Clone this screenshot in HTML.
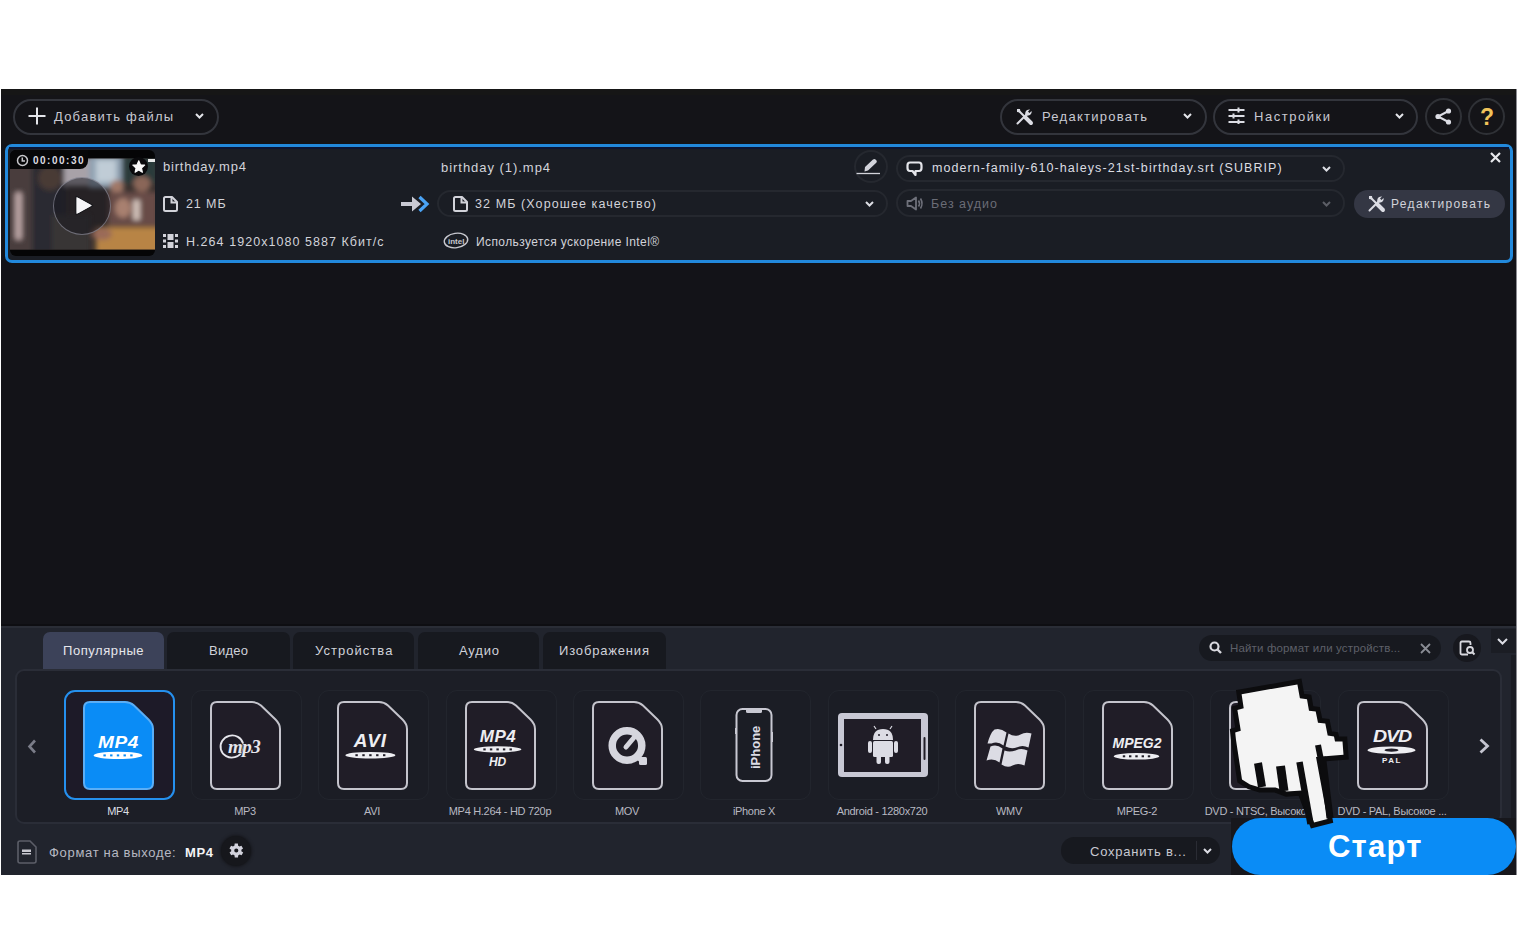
<!DOCTYPE html>
<html><head><meta charset="utf-8">
<style>
*{margin:0;padding:0;box-sizing:border-box}
html,body{width:1517px;height:939px;overflow:hidden;background:#fff}
body{position:relative;font-family:"Liberation Sans",sans-serif;color:#d8d9de}
.a{position:absolute}
.t{position:absolute;white-space:nowrap;line-height:1}
svg{position:absolute;overflow:visible}
</style></head><body>
<!-- app frame -->
<div class="a" style="left:1px;top:89px;width:1515px;height:786px;background:#131318"></div>
<!-- toolbar -->
<div class="a" style="left:1px;top:89px;width:1515px;height:55px;background:#141418"></div>
<div class="a" style="left:1px;top:89px;width:1515px;height:6px;background:#161616"></div>

<!-- add files button -->
<div class="a" style="left:13px;top:99px;width:206px;height:36px;border:2px solid #33353c;border-radius:18px"></div>
<svg style="left:28px;top:107px" width="18" height="18"><path d="M9 0.5V17.5M0.5 9H17.5" stroke="#e4e5ea" stroke-width="2"/></svg>
<div class="t" style="left:54px;top:110px;font-size:13px;letter-spacing:1.22px;color:#c8c9d2">Добавить файлы</div>
<svg style="left:195px;top:113px" width="9" height="6"><path d="M1 1L4.5 4.5L8 1" stroke="#e4e5ea" stroke-width="2" fill="none"/></svg>

<!-- Edit button -->
<div class="a" style="left:1000px;top:99px;width:207px;height:36px;border:2px solid #33353c;border-radius:18px"></div>
<svg style="left:1016px;top:108px" width="17" height="17" viewBox="0 0 17 17"><path d="M1.5 1.5L15 15" stroke="#dcdde4" stroke-width="2"/><path d="M9.5 9.5L15 15" stroke="#dcdde4" stroke-width="4" stroke-linecap="round"/><path d="M1 1L4 1L4.5 4.5L1 4Z" fill="#dcdde4"/><path d="M1.5 15.5L10 7" stroke="#dcdde4" stroke-width="2" stroke-linecap="round"/><path d="M9.5 7.5C8.5 4 10.5 1 14 1.5L12 3.5L13.5 5L15.5 3C16.5 6 13 8.5 10 7.5Z" fill="#dcdde4"/></svg>
<div class="t" style="left:1042px;top:110px;font-size:13px;letter-spacing:1.27px;color:#c8c9d2">Редактировать</div>
<svg style="left:1183px;top:113px" width="9" height="6"><path d="M1 1L4.5 4.5L8 1" stroke="#e4e5ea" stroke-width="2" fill="none"/></svg>
<!-- Settings button -->
<div class="a" style="left:1213px;top:99px;width:205px;height:36px;border:2px solid #33353c;border-radius:18px"></div>
<svg style="left:1228px;top:107px" width="17" height="17" viewBox="0 0 17 17"><path d="M0.5 3H16.5M0.5 9H16.5M0.5 15H16.5" stroke="#dcdde4" stroke-width="2"/><path d="M10.5 0.5V5.5M5.5 6.5V11.5M10.5 12.5V17" stroke="#dcdde4" stroke-width="2"/></svg>
<div class="t" style="left:1254px;top:110px;font-size:13px;letter-spacing:1.53px;color:#c8c9d2">Настройки</div>
<svg style="left:1395px;top:113px" width="9" height="6"><path d="M1 1L4.5 4.5L8 1" stroke="#e4e5ea" stroke-width="2" fill="none"/></svg>
<!-- share / help -->
<div class="a" style="left:1425px;top:98px;width:37px;height:37px;border:2px solid #2f3136;border-radius:50%"></div>
<svg style="left:1435px;top:108px" width="17" height="17" viewBox="0 0 17 17"><path d="M13.5 3L3 8.5L13.5 14" stroke="#dcdde4" stroke-width="2" fill="none"/><circle cx="13.5" cy="3" r="2.6" fill="#dcdde4"/><circle cx="3" cy="8.5" r="2.6" fill="#dcdde4"/><circle cx="13.5" cy="14" r="2.6" fill="#dcdde4"/></svg>
<div class="a" style="left:1468px;top:98px;width:37px;height:37px;border:2px solid #2f3136;border-radius:50%"></div>
<div class="t" style="left:1480px;top:106px;font-size:23px;font-weight:700;color:#f0c35a">?</div>

<!-- file card -->
<div class="a" style="left:5px;top:144px;width:1508px;height:119px;border:3px solid #2289dc;border-radius:7px;background:#1a1d24"></div>
<div class="a" style="left:9px;top:147px;width:1500px;height:2px;background:#0c1533"></div>
<!-- thumbnail -->
<div class="a" style="left:10px;top:150px;width:145px;height:106px;background:#050506;border-radius:6px;overflow:hidden">
<svg style="left:0;top:0" width="145" height="106" viewBox="0 0 145 106">
<defs><filter id="bl" x="-20%" y="-20%" width="140%" height="140%"><feGaussianBlur stdDeviation="2.5"/></filter>
<clipPath id="cp"><rect x="0" y="8.5" width="145" height="91"/></clipPath></defs>
<g clip-path="url(#cp)">
<rect x="0" y="8" width="145" height="92" fill="#38302e"/>
<g filter="url(#bl)">
<rect x="-5" y="10" width="28" height="95" fill="#4a3c3c"/>
<rect x="5" y="42" width="7" height="48" rx="3" fill="#b8a2a2"/>
<rect x="22" y="10" width="34" height="95" fill="#2c2a30"/>
<ellipse cx="40" cy="28" rx="12" ry="12" fill="#4a3a36"/>
<rect x="54" y="8" width="26" height="28" fill="#a8a2a8"/>
<rect x="79" y="6" width="34" height="32" fill="#90a2b2"/>
<rect x="86" y="10" width="20" height="22" fill="#c0ccd6"/>
<rect x="112" y="6" width="36" height="28" fill="#2c3a3a"/>
<ellipse cx="107" cy="37" rx="7" ry="7" fill="#a07868"/>
<ellipse cx="132" cy="34" rx="9" ry="8" fill="#8a6658"/>
<rect x="98" y="42" width="50" height="34" fill="#684c46"/>
<ellipse cx="113" cy="58" rx="8" ry="10" fill="#a88070"/>
<rect x="123" y="50" width="7" height="20" fill="#d0c0b8"/>
<rect x="42" y="65" width="38" height="40" fill="#383434"/>
<rect x="86" y="77" width="64" height="28" fill="#b88444"/>
<ellipse cx="92" cy="84" rx="10" ry="6" fill="#9a6a58"/>
</g>
</g>
</svg>
</div>
<!-- time badge -->
<div class="a" style="left:10px;top:150px;width:78px;height:19px;background:#070708;border-radius:6px 0 8px 0"></div>
<svg style="left:16px;top:154px" width="13" height="13" viewBox="0 0 13 13"><circle cx="6.5" cy="6.5" r="5" stroke="#c8c8cc" stroke-width="1.5" fill="none"/><path d="M6.3 3.5V7H9" stroke="#c8c8cc" stroke-width="1.5" fill="none"/></svg>
<div class="t" style="left:33px;top:156px;font-size:10px;font-weight:700;letter-spacing:1.5px;color:#dcdce0">00:00:30</div>
<!-- star -->
<div class="a" style="left:129px;top:157px;width:19px;height:19px;background:#0a0a0c;border-radius:50%"></div>
<svg style="left:132px;top:159.5px" width="13.5" height="13.5" viewBox="0 0 24 24"><path d="M12 1.5L15 8.5L22.5 9.2L16.8 14.2L18.5 21.8L12 17.8L5.5 21.8L7.2 14.2L1.5 9.2L9 8.5Z" fill="#fafafa" stroke="#fafafa" stroke-width="2" stroke-linejoin="round"/></svg>
<div class="a" style="left:148px;top:159px;width:7px;height:3px;background:#e8e8e8"></div>
<!-- play -->
<div class="a" style="left:53px;top:176.5px;width:58px;height:58px;border-radius:50%;background:rgba(20,20,28,0.5);border:1.5px solid rgba(180,180,195,0.5)"></div>
<svg style="left:73px;top:194px" width="22" height="23" viewBox="0 0 22 23"><path d="M3.5 3L19 11.5L3.5 20Z" fill="#f6f6f8" stroke="#1a1a1e" stroke-width="2.5" stroke-linejoin="round" paint-order="stroke fill"/><path d="M4.5 4.5L17 11.5L4.5 18.5Z" fill="#f6f6f8" stroke="#f6f6f8" stroke-width="1.5" stroke-linejoin="round"/></svg>

<!-- left info -->
<div class="t" style="left:163px;top:160px;font-size:13px;letter-spacing:0.8px;color:#d2d3da">birthday.mp4</div>
<svg style="left:163px;top:196px" width="15" height="16" viewBox="0 0 15 16"><path d="M1 2.5Q1 1 2.5 1H9L14 6V13.5Q14 15 12.5 15H2.5Q1 15 1 13.5Z" stroke="#d2d3da" stroke-width="2" fill="none" stroke-linejoin="round"/><path d="M8.5 1.5V6.5H13.5" stroke="#d2d3da" stroke-width="2" fill="none"/></svg>
<div class="t" style="left:186px;top:198px;font-size:12.5px;letter-spacing:0.9px;color:#d2d3da">21 МБ</div>
<svg style="left:163px;top:234px" width="15" height="14" viewBox="0 0 15 14"><rect x="0" y="0" width="3" height="3" fill="#d2d3da"/><rect x="0" y="5.5" width="3" height="3" fill="#d2d3da"/><rect x="0" y="11" width="3" height="3" fill="#d2d3da"/><rect x="12" y="0" width="3" height="3" fill="#d2d3da"/><rect x="12" y="5.5" width="3" height="3" fill="#d2d3da"/><rect x="12" y="11" width="3" height="3" fill="#d2d3da"/><rect x="4.5" y="0" width="6" height="6" fill="#d2d3da"/><rect x="4.5" y="8" width="6" height="6" fill="#d2d3da"/></svg>
<div class="t" style="left:186px;top:236px;font-size:12.5px;letter-spacing:1.05px;color:#d2d3da">H.264 1920x1080 5887 Кбит/с</div>

<!-- arrow -->
<svg style="left:400px;top:195px" width="31" height="18" viewBox="0 0 31 18"><path d="M1 7H12V1.5L21 9L12 16.5V11H1Z" fill="#c9c9d3"/><path d="M19.5 2L27 9L19.5 16" stroke="#4aa3f5" stroke-width="3.2" fill="none"/></svg>

<!-- middle -->
<div class="t" style="left:441px;top:161px;font-size:13px;letter-spacing:0.96px;color:#d2d3da">birthday (1).mp4</div>
<div class="a" style="left:437px;top:190px;width:451px;height:27px;border:2px solid #25282f;border-radius:14px"></div>
<svg style="left:453px;top:196px" width="15" height="16" viewBox="0 0 15 16"><path d="M1 2.5Q1 1 2.5 1H9L14 6V13.5Q14 15 12.5 15H2.5Q1 15 1 13.5Z" stroke="#d2d3da" stroke-width="2" fill="none" stroke-linejoin="round"/><path d="M8.5 1.5V6.5H13.5" stroke="#d2d3da" stroke-width="2" fill="none"/></svg>
<div class="t" style="left:475px;top:198px;font-size:12.5px;letter-spacing:1.1px;color:#d2d3da">32 МБ (Хорошее качество)</div>
<svg style="left:865px;top:201px" width="9" height="6"><path d="M1 1L4.5 4.5L8 1" stroke="#dcdde4" stroke-width="2" fill="none"/></svg>
<svg style="left:443px;top:232px" width="26" height="17" viewBox="0 0 26 17"><ellipse cx="13" cy="8.5" rx="11.8" ry="7.2" stroke="#c8c9d0" stroke-width="1.4" fill="none" transform="rotate(-8 13 8.5)"/><text x="5" y="11.5" font-family="Liberation Sans" font-size="8" font-weight="700" fill="#c8c9d0">intel</text></svg>
<div class="t" style="left:476px;top:236px;font-size:12px;letter-spacing:0.41px;color:#d2d3da">Используется ускорение Intel®</div>
<!-- pencil -->
<div class="a" style="left:854px;top:150px;width:34px;height:33px;border:2px solid #25282f;border-radius:50%"></div>
<svg style="left:856px;top:157px" width="26" height="18" viewBox="0 0 26 18"><path d="M9 10L17 2.5Q18.5 1.5 19.5 2.5L20.5 3.5Q21.5 5 20 6L12 13.5L8.5 14.5Z" fill="#d2d3da"/><path d="M0.5 16.5H24" stroke="#d2d3da" stroke-width="1.3"/></svg>

<!-- right: subtitles / audio -->
<div class="a" style="left:896px;top:155px;width:449px;height:27px;border:2px solid #25282f;border-radius:14px"></div>
<svg style="left:906px;top:161px" width="17" height="16" viewBox="0 0 17 16"><path d="M4 1.5H13Q15.5 1.5 15.5 4.5V7Q15.5 10 13 10H9.5V14L6.5 10H4Q1.5 10 1.5 7V4.5Q1.5 1.5 4 1.5Z" stroke="#e4e5ea" stroke-width="2.2" fill="none" stroke-linejoin="round"/></svg>
<div class="t" style="left:932px;top:162px;font-size:12.5px;letter-spacing:1.08px;color:#dcdde3">modern-family-610-haleys-21st-birthday.srt (SUBRIP)</div>
<svg style="left:1322px;top:166px" width="9" height="6"><path d="M1 1L4.5 4.5L8 1" stroke="#dcdde4" stroke-width="2" fill="none"/></svg>
<div class="a" style="left:896px;top:189px;width:449px;height:28px;border:2px solid #25282f;border-radius:14px"></div>
<svg style="left:906px;top:196px" width="18" height="15" viewBox="0 0 18 15"><path d="M1.5 5H5L10 1.5V13.5L5 10H1.5Z" stroke="#6e707a" stroke-width="1.8" fill="none" stroke-linejoin="round"/><path d="M12.5 4.5Q14.5 7.5 12.5 10.5M14.5 2.5Q17.5 7.5 14.5 12.5" stroke="#6e707a" stroke-width="1.6" fill="none"/></svg>
<div class="t" style="left:931px;top:198px;font-size:12.5px;letter-spacing:1.0px;color:#6a6c76">Без аудио</div>
<svg style="left:1322px;top:201px" width="9" height="6"><path d="M1 1L4.5 4.5L8 1" stroke="#5c5e66" stroke-width="2" fill="none"/></svg>
<!-- edit in card -->
<div class="a" style="left:1354px;top:190px;width:151px;height:28px;background:#343744;border-radius:14px"></div>
<svg style="left:1368px;top:195px" width="17" height="17" viewBox="0 0 17 17"><path d="M1.5 1.5L15 15" stroke="#dcdde4" stroke-width="2"/><path d="M9.5 9.5L15 15" stroke="#dcdde4" stroke-width="4" stroke-linecap="round"/><path d="M1 1L4 1L4.5 4.5L1 4Z" fill="#dcdde4"/><path d="M1.5 15.5L10 7" stroke="#dcdde4" stroke-width="2" stroke-linecap="round"/><path d="M9.5 7.5C8.5 4 10.5 1 14 1.5L12 3.5L13.5 5L15.5 3C16.5 6 13 8.5 10 7.5Z" fill="#dcdde4"/></svg>
<div class="t" style="left:1391px;top:198px;font-size:12px;letter-spacing:1.34px;color:#d2d3da">Редактировать</div>
<!-- close -->
<svg style="left:1490px;top:152px" width="11" height="11" viewBox="0 0 11 11"><path d="M1 1L10 10M10 1L1 10" stroke="#e8e8ec" stroke-width="2.2"/></svg>

<!-- bottom panel -->
<div class="a" style="left:1px;top:626px;width:1515px;height:249px;background:#21242d"></div>
<div class="a" style="left:1px;top:624px;width:1515px;height:2px;background:#0e0e12"></div>
<div class="a" style="left:1px;top:626px;width:1515px;height:2px;background:#2a2d36"></div>
<!-- tabs -->
<div class="a" style="left:43px;top:632px;width:121px;height:38px;background:#3c4259;border-radius:7px 7px 0 0"></div>
<div class="a" style="left:167px;top:632px;width:123px;height:38px;background:#17191f;border-radius:7px 7px 0 0"></div>
<div class="a" style="left:293px;top:632px;width:121px;height:38px;background:#17191f;border-radius:7px 7px 0 0"></div>
<div class="a" style="left:418px;top:632px;width:121px;height:38px;background:#17191f;border-radius:7px 7px 0 0"></div>
<div class="a" style="left:543px;top:632px;width:123px;height:38px;background:#17191f;border-radius:7px 7px 0 0"></div>
<div class="t" style="left:63px;top:644px;font-size:13px;letter-spacing:0.57px;color:#e6e7ec">Популярные</div>
<div class="t" style="left:209px;top:644px;font-size:13px;letter-spacing:0.25px;color:#d0d2da">Видео</div>
<div class="t" style="left:315px;top:644px;font-size:13px;letter-spacing:1.04px;color:#d0d2da">Устройства</div>
<div class="t" style="left:459px;top:644px;font-size:13px;letter-spacing:0.83px;color:#d0d2da">Аудио</div>
<div class="t" style="left:559px;top:644px;font-size:13px;letter-spacing:0.83px;color:#d0d2da">Изображения</div>
<!-- search -->
<div class="a" style="left:1199px;top:635px;width:242px;height:26px;background:#17191f;border-radius:13px"></div>
<svg style="left:1209px;top:641px" width="13" height="13" viewBox="0 0 13 13"><circle cx="5.5" cy="5.5" r="4" stroke="#d8d8de" stroke-width="2.2" fill="none"/><path d="M8.5 8.5L12 12" stroke="#d8d8de" stroke-width="2.4"/></svg>
<div class="t" style="left:1230px;top:643px;font-size:11.5px;letter-spacing:0.15px;color:#5e6069">Найти формат или устройств...</div>
<svg style="left:1420px;top:643px" width="11" height="11" viewBox="0 0 11 11"><path d="M1 1L10 10M10 1L1 10" stroke="#8a8c94" stroke-width="1.8"/></svg>
<div class="a" style="left:1453px;top:634px;width:28px;height:28px;background:#17181e;border-radius:50%"></div>
<svg style="left:1459px;top:640px" width="17" height="16" viewBox="0 0 17 16"><path d="M9 14.5H3Q1.5 14.5 1.5 13V3Q1.5 1.5 3 1.5H10Q11.5 1.5 11.5 3V5" stroke="#d8d8de" stroke-width="1.8" fill="none"/><circle cx="11" cy="10" r="3" stroke="#d8d8de" stroke-width="1.8" fill="none"/><path d="M13 12L15.5 14.5" stroke="#d8d8de" stroke-width="2"/></svg>
<div class="a" style="left:1491px;top:629px;width:25px;height:24px;background:#1b1d24"></div>
<svg style="left:1497px;top:638px" width="11" height="7"><path d="M1 1L5.5 5.5L10 1" stroke="#dcdde4" stroke-width="2" fill="none"/></svg>
<!-- grid panel -->
<div class="a" style="left:15px;top:669px;width:1487px;height:155px;background:#1c1e26;border:2px solid #2a2d37;border-radius:9px"></div>
<svg style="left:27px;top:739px" width="10" height="15" viewBox="0 0 10 15"><path d="M8 1.5L2.5 7.5L8 13.5" stroke="#7a7c88" stroke-width="2.6" fill="none"/></svg>
<svg style="left:1478px;top:738px" width="12" height="16" viewBox="0 0 12 16"><path d="M2.5 1.5L9.5 8L2.5 14.5" stroke="#c4c5d0" stroke-width="2.8" fill="none"/></svg>
<!-- cards -->
<div class="a" style="left:64px;top:690px;width:111px;height:110px;border:2.5px solid #2590ee;border-radius:11px;background:#1d1a28"></div>
<svg style="left:83px;top:701px" width="71" height="89" viewBox="0 0 71 89"><path d="M7 1H42Q47 1 51 4.5L65.5 18.5Q70 23 70 28V82Q70 88 64 88H7Q1 88 1 82V7Q1 1 7 1Z" fill="#0a8cf6" stroke="#5aaef6" stroke-width="2"/><text x="35.5" y="47" text-anchor="middle" font-family="Liberation Sans" font-size="17" font-weight="700" font-style="italic" fill="#ffffff" letter-spacing="0.5" transform="translate(35.5 0) scale(1.12 1) translate(-35.5 0)">MP4</text><ellipse cx="35" cy="54.4" rx="24.4" ry="3.6" fill="#ffffff"/><rect x="20.4" y="53.4" width="2.4" height="2" fill="#0a8cf6"/><rect x="27.1" y="53.4" width="2.4" height="2" fill="#0a8cf6"/><rect x="33.8" y="53.4" width="2.4" height="2" fill="#0a8cf6"/><rect x="40.5" y="53.4" width="2.4" height="2" fill="#0a8cf6"/><rect x="47.2" y="53.4" width="2.4" height="2" fill="#0a8cf6"/></svg>
<div class="t" style="left:18px;width:200px;text-align:center;top:806px;font-size:11px;letter-spacing:-0.3px;color:#dcdde3">MP4</div>
<div class="a" style="left:191px;top:690px;width:111px;height:110px;border:1px solid #22252d;border-radius:11px;background:#1b1d25"></div>
<svg style="left:210px;top:701px" width="71" height="89" viewBox="0 0 71 89"><path d="M7 1H42Q47 1 51 4.5L65.5 18.5Q70 23 70 28V82Q70 88 64 88H7Q1 88 1 82V7Q1 1 7 1Z" fill="#201d27" stroke="#c4c4cc" stroke-width="2"/><ellipse cx="22" cy="45.5" rx="11.5" ry="11" stroke="#e6e6ec" stroke-width="1.8" fill="none" transform="rotate(-15 22 45.5)"/><text x="18" y="51.5" font-family="Liberation Serif" font-size="19" font-weight="700" font-style="italic" fill="#e6e6ec" stroke="#201d27" stroke-width="1.2" paint-order="stroke fill" letter-spacing="-0.5">mp3</text></svg>
<div class="t" style="left:145px;width:200px;text-align:center;top:806px;font-size:11px;letter-spacing:-0.3px;color:#b8b9c2">MP3</div>
<div class="a" style="left:318px;top:690px;width:111px;height:110px;border:1px solid #22252d;border-radius:11px;background:#1b1d25"></div>
<svg style="left:337px;top:701px" width="71" height="89" viewBox="0 0 71 89"><path d="M7 1H42Q47 1 51 4.5L65.5 18.5Q70 23 70 28V82Q70 88 64 88H7Q1 88 1 82V7Q1 1 7 1Z" fill="#201d27" stroke="#c4c4cc" stroke-width="2"/><text x="33.5" y="46.4" text-anchor="middle" font-family="Liberation Sans" font-size="19" font-weight="700" font-style="italic" fill="#eeeef2" letter-spacing="1">AVI</text><ellipse cx="33.4" cy="54.2" rx="25" ry="3.3" fill="#eeeef2"/><rect x="18.4" y="53.2" width="2.4" height="2" fill="#201d27"/><rect x="25.3" y="53.2" width="2.4" height="2" fill="#201d27"/><rect x="32.2" y="53.2" width="2.4" height="2" fill="#201d27"/><rect x="39.1" y="53.2" width="2.4" height="2" fill="#201d27"/><rect x="46.0" y="53.2" width="2.4" height="2" fill="#201d27"/></svg>
<div class="t" style="left:272px;width:200px;text-align:center;top:806px;font-size:11px;letter-spacing:-0.3px;color:#b8b9c2">AVI</div>
<div class="a" style="left:446px;top:690px;width:111px;height:110px;border:1px solid #22252d;border-radius:11px;background:#1b1d25"></div>
<svg style="left:465px;top:701px" width="71" height="89" viewBox="0 0 71 89"><path d="M7 1H42Q47 1 51 4.5L65.5 18.5Q70 23 70 28V82Q70 88 64 88H7Q1 88 1 82V7Q1 1 7 1Z" fill="#201d27" stroke="#c4c4cc" stroke-width="2"/><text x="33" y="40.7" text-anchor="middle" font-family="Liberation Sans" font-size="17" font-weight="700" font-style="italic" fill="#eeeef2" letter-spacing="0.5">MP4</text><ellipse cx="32.6" cy="48.4" rx="23.8" ry="3.1" fill="#eeeef2"/><rect x="18.3" y="47.4" width="2.4" height="2" fill="#201d27"/><rect x="24.9" y="47.4" width="2.4" height="2" fill="#201d27"/><rect x="31.4" y="47.4" width="2.4" height="2" fill="#201d27"/><rect x="37.9" y="47.4" width="2.4" height="2" fill="#201d27"/><rect x="44.5" y="47.4" width="2.4" height="2" fill="#201d27"/><text x="32.6" y="65" text-anchor="middle" font-family="Liberation Sans" font-size="12" font-weight="700" font-style="italic" fill="#eeeef2">HD</text></svg>
<div class="t" style="left:400px;width:200px;text-align:center;top:806px;font-size:11px;letter-spacing:-0.3px;color:#b8b9c2">MP4 H.264 - HD 720p</div>
<div class="a" style="left:573px;top:690px;width:111px;height:110px;border:1px solid #22252d;border-radius:11px;background:#1b1d25"></div>
<svg style="left:592px;top:701px" width="71" height="89" viewBox="0 0 71 89"><path d="M7 1H42Q47 1 51 4.5L65.5 18.5Q70 23 70 28V82Q70 88 64 88H7Q1 88 1 82V7Q1 1 7 1Z" fill="#201d27" stroke="#c4c4cc" stroke-width="2"/><circle cx="35" cy="44.5" r="14.8" stroke="#d6d6de" stroke-width="7.5" fill="none"/><path d="M46 54L54 61L51 64L43 57Z" fill="#d6d6de"/><rect x="47" y="56" width="8" height="8" rx="1.5" fill="#d6d6de"/><path d="M34 46L42 36.5" stroke="#d6d6de" stroke-width="5" stroke-linecap="round"/></svg>
<div class="t" style="left:527px;width:200px;text-align:center;top:806px;font-size:11px;letter-spacing:-0.3px;color:#b8b9c2">MOV</div>
<div class="a" style="left:700px;top:690px;width:111px;height:110px;border:1px solid #22252d;border-radius:11px;background:#1b1d25"></div>
<svg style="left:735px;top:708px" width="38" height="74" viewBox="0 0 38 74"><rect x="1.5" y="1" width="35" height="72" rx="6" stroke="#c8c8d2" stroke-width="2" fill="none"/><path d="M11 1.5H27V3.5Q27 5 25.5 5H12.5Q11 5 11 3.5Z" fill="#c8c8d2"/><rect x="0" y="20" width="1.5" height="6" fill="#c8c8d2"/><rect x="36.5" y="24" width="1.5" height="10" fill="#c8c8d2"/><text transform="translate(25 61) rotate(-90)" font-family="Liberation Sans" font-size="13" font-weight="700" fill="#dcdce4">iPhone</text></svg>
<div class="t" style="left:654px;width:200px;text-align:center;top:806px;font-size:11px;letter-spacing:-0.3px;color:#b8b9c2">iPhone X</div>
<div class="a" style="left:828px;top:690px;width:111px;height:110px;border:1px solid #22252d;border-radius:11px;background:#1b1d25"></div>
<svg style="left:838px;top:713px" width="91" height="65" viewBox="0 0 91 65"><rect x="0" y="0" width="90" height="64" rx="4" fill="#c8c8d4"/><rect x="6" y="6" width="77" height="53" fill="#201d27"/><circle cx="3" cy="32" r="1.3" fill="#201d27"/><rect x="85.5" y="24" width="2" height="23" rx="1" fill="#201d27"/><g fill="#dcdce4"><path d="M35 27Q35 16 45 16Q55 16 55 27Z"/><rect x="35" y="28" width="20" height="16" rx="1.5"/><rect x="30" y="28" width="4" height="12" rx="2"/><rect x="56" y="28" width="4" height="12" rx="2"/><rect x="38.5" y="42" width="4.5" height="9" rx="2"/><rect x="47" y="42" width="4.5" height="9" rx="2"/><path d="M38 16L36 13M52 16L54 13" stroke="#dcdce4" stroke-width="1.2"/></g><circle cx="41" cy="22" r="1" fill="#201d27"/><circle cx="49" cy="22" r="1" fill="#201d27"/></svg>
<div class="t" style="left:782px;width:200px;text-align:center;top:806px;font-size:11px;letter-spacing:-0.3px;color:#b8b9c2">Android - 1280x720</div>
<div class="a" style="left:955px;top:690px;width:111px;height:110px;border:1px solid #22252d;border-radius:11px;background:#1b1d25"></div>
<svg style="left:974px;top:701px" width="71" height="89" viewBox="0 0 71 89"><path d="M7 1H42Q47 1 51 4.5L65.5 18.5Q70 23 70 28V82Q70 88 64 88H7Q1 88 1 82V7Q1 1 7 1Z" fill="#201d27" stroke="#c4c4cc" stroke-width="2"/><g transform="translate(4.5 1.5)"><path d="M9 41Q12 30 16 27Q22 25 28 30L25 43Q19 38 13 41Z" fill="#dcdce4"/><path d="M30 31Q36 35 42 32Q47 29 53 31L50 45Q44 42 38 45Q33 47 27 44Z" fill="#dcdce4"/><path d="M12 44Q18 41 24 46L21 60Q15 55 8 58Z" fill="#dcdce4"/><path d="M26 48Q31 50 37 48Q43 45 49 48L46 63Q40 60 34 63Q29 66 23 62Z" fill="#dcdce4"/></g></svg>
<div class="t" style="left:909px;width:200px;text-align:center;top:806px;font-size:11px;letter-spacing:-0.3px;color:#b8b9c2">WMV</div>
<div class="a" style="left:1083px;top:690px;width:111px;height:110px;border:1px solid #22252d;border-radius:11px;background:#1b1d25"></div>
<svg style="left:1102px;top:701px" width="71" height="89" viewBox="0 0 71 89"><path d="M7 1H42Q47 1 51 4.5L65.5 18.5Q70 23 70 28V82Q70 88 64 88H7Q1 88 1 82V7Q1 1 7 1Z" fill="#201d27" stroke="#c4c4cc" stroke-width="2"/><text x="35" y="47.4" text-anchor="middle" font-family="Liberation Sans" font-size="14" font-weight="700" font-style="italic" fill="#eeeef2" letter-spacing="0">MPEG2</text><ellipse cx="34.5" cy="55.3" rx="22.8" ry="3.3" fill="#eeeef2"/><rect x="20.8" y="54.3" width="2.4" height="2" fill="#201d27"/><rect x="27.0" y="54.3" width="2.4" height="2" fill="#201d27"/><rect x="33.3" y="54.3" width="2.4" height="2" fill="#201d27"/><rect x="39.6" y="54.3" width="2.4" height="2" fill="#201d27"/><rect x="45.8" y="54.3" width="2.4" height="2" fill="#201d27"/></svg>
<div class="t" style="left:1037px;width:200px;text-align:center;top:806px;font-size:11px;letter-spacing:-0.3px;color:#b8b9c2">MPEG-2</div>
<div class="a" style="left:1210px;top:690px;width:111px;height:110px;border:1px solid #22252d;border-radius:11px;background:#1b1d25"></div>
<svg style="left:1229px;top:701px" width="71" height="89" viewBox="0 0 71 89"><path d="M7 1H42Q47 1 51 4.5L65.5 18.5Q70 23 70 28V82Q70 88 64 88H7Q1 88 1 82V7Q1 1 7 1Z" fill="#201d27" stroke="#c4c4cc" stroke-width="2"/><text x="35" y="41" text-anchor="middle" font-family="Liberation Sans" font-size="17" font-weight="700" font-style="italic" fill="#eeeef2" letter-spacing="-1" transform="translate(35 35) scale(1.15 1) translate(-35 -35)">DVD</text><ellipse cx="34.5" cy="49.2" rx="24" ry="3.7" fill="#eeeef2"/><ellipse cx="34.5" cy="49.2" rx="7" ry="1.6" fill="#201d27"/><text x="34.5" y="61.5" text-anchor="middle" font-family="Liberation Sans" font-size="8" font-weight="700" fill="#eeeef2" letter-spacing="1.5">NTSC</text></svg>
<div class="t" style="left:1164px;width:200px;text-align:center;top:806px;font-size:11px;letter-spacing:-0.3px;color:#b8b9c2">DVD - NTSC, Высокое ...</div>
<div class="a" style="left:1338px;top:690px;width:111px;height:110px;border:1px solid #22252d;border-radius:11px;background:#1b1d25"></div>
<svg style="left:1357px;top:701px" width="71" height="89" viewBox="0 0 71 89"><path d="M7 1H42Q47 1 51 4.5L65.5 18.5Q70 23 70 28V82Q70 88 64 88H7Q1 88 1 82V7Q1 1 7 1Z" fill="#201d27" stroke="#c4c4cc" stroke-width="2"/><text x="35" y="41" text-anchor="middle" font-family="Liberation Sans" font-size="17" font-weight="700" font-style="italic" fill="#eeeef2" letter-spacing="-1" transform="translate(35 35) scale(1.15 1) translate(-35 -35)">DVD</text><ellipse cx="34.5" cy="49.2" rx="24" ry="3.7" fill="#eeeef2"/><ellipse cx="34.5" cy="49.2" rx="7" ry="1.6" fill="#201d27"/><text x="35" y="61.5" text-anchor="middle" font-family="Liberation Sans" font-size="8" font-weight="700" fill="#eeeef2" letter-spacing="1.5">PAL</text></svg>
<div class="t" style="left:1292px;width:200px;text-align:center;top:806px;font-size:11px;letter-spacing:-0.3px;color:#b8b9c2">DVD - PAL, Высокое ...</div>
<div class="a" style="left:1511px;top:655px;width:5px;height:163px;background:#1a1c23"></div>
<!-- bottom bar -->
<svg style="left:17px;top:840px" width="20" height="24" viewBox="0 0 20 24"><path d="M3 1H13L19 7V21Q19 23 17 23H3Q1 23 1 21V3Q1 1 3 1Z" stroke="#5c5e68" stroke-width="1.6" fill="none"/><rect x="5" y="9.5" width="9" height="2.5" fill="#c8c8d0"/><rect x="5" y="13" width="9" height="1.5" fill="#c8c8d0"/></svg>
<div class="t" style="left:49px;top:846px;font-size:13px;letter-spacing:0.68px;color:#b6b8c2">Формат на выходе:</div>
<div class="t" style="left:185px;top:846px;font-size:13px;font-weight:700;letter-spacing:0.6px;color:#f4f4f6">MP4</div>
<div class="a" style="left:221px;top:836px;width:30px;height:30px;background:#16171c;border-radius:50%;box-shadow:0 0 3px 1px #16171c"></div>
<svg style="left:226px;top:841px" width="19" height="19" viewBox="0 0 24 24"><path fill="#d2d2dc" d="M19.4 13a7.5 7.5 0 0 0 0-2l2.1-1.6-2-3.5-2.5 1a7.6 7.6 0 0 0-1.7-1L15 3.2h-4l-.4 2.7a7.6 7.6 0 0 0-1.7 1l-2.5-1-2 3.5L6.6 11a7.5 7.5 0 0 0 0 2l-2.1 1.6 2 3.5 2.5-1a7.6 7.6 0 0 0 1.7 1l.4 2.7h4l.4-2.7a7.6 7.6 0 0 0 1.7-1l2.5 1 2-3.5zM13 14.6a2.6 2.6 0 1 1 0-5.2 2.6 2.6 0 0 1 0 5.2z"/></svg>
<!-- save to -->
<div class="a" style="left:1061px;top:837px;width:159px;height:27px;background:#17191f;border-radius:13px"></div>
<div class="t" style="left:1090px;top:845px;font-size:13px;letter-spacing:0.77px;color:#c8c9d2">Сохранить в...</div>
<div class="a" style="left:1196px;top:841px;width:1px;height:19px;background:#2a2c34"></div>
<svg style="left:1203px;top:848px" width="9" height="6"><path d="M1 1L4.5 4.5L8 1" stroke="#dcdde4" stroke-width="2" fill="none"/></svg>
<!-- start button -->
<div class="a" style="left:1231px;top:818px;width:285px;height:57px;background:#17171c"></div>
<div class="a" style="left:1232px;top:818px;width:284px;height:57px;background:#0a8cf6;border-radius:28.5px"></div>
<div class="t" style="left:1328px;top:831px;font-size:31px;font-weight:700;letter-spacing:1.2px;color:#ffffff">Старт</div>
<div class="a" style="left:1516px;top:89px;width:1px;height:786px;background:#8c8c92"></div>
<!-- hand cursor -->
<svg style="left:1220px;top:670px" width="140" height="170" viewBox="0 0 140 170"><polygon points="21.6,24.2 77.4,14.4 79.9,28.2 87.0,29.2 89.0,40.7 95.7,41.6 98.0,52.7 105.3,53.6 107.7,65.6 114.0,66.6 115.0,71.4 122.5,71.4 123.5,84.8 96.0,87.0 107.5,149.0 94.0,152.5 82.0,120.6 66.6,121.6 55.5,117.5 40.0,117.5 30.0,114.5 22.0,109.4 16.0,70.0 15.2,62.5 20.8,60.8 17.4,40.0 23.7,38.2" fill="#f4f4f4" stroke="#0c0c0e" stroke-width="10" stroke-linejoin="miter" paint-order="stroke fill"/><path d="M38.0 93.0L42.0 117.0" stroke="#0c0c0e" stroke-width="8"/><path d="M60.5 96.0L64.0 121.0" stroke="#0c0c0e" stroke-width="9"/><path d="M79.5 92.0L90.5 154.0" stroke="#0c0c0e" stroke-width="6.5"/><path d="M98.0 75.0L101.0 90.0" stroke="#0c0c0e" stroke-width="6"/><path d="M102.5 87.0L110.0 148.0" stroke="#0c0c0e" stroke-width="7"/></svg>
</body></html>
